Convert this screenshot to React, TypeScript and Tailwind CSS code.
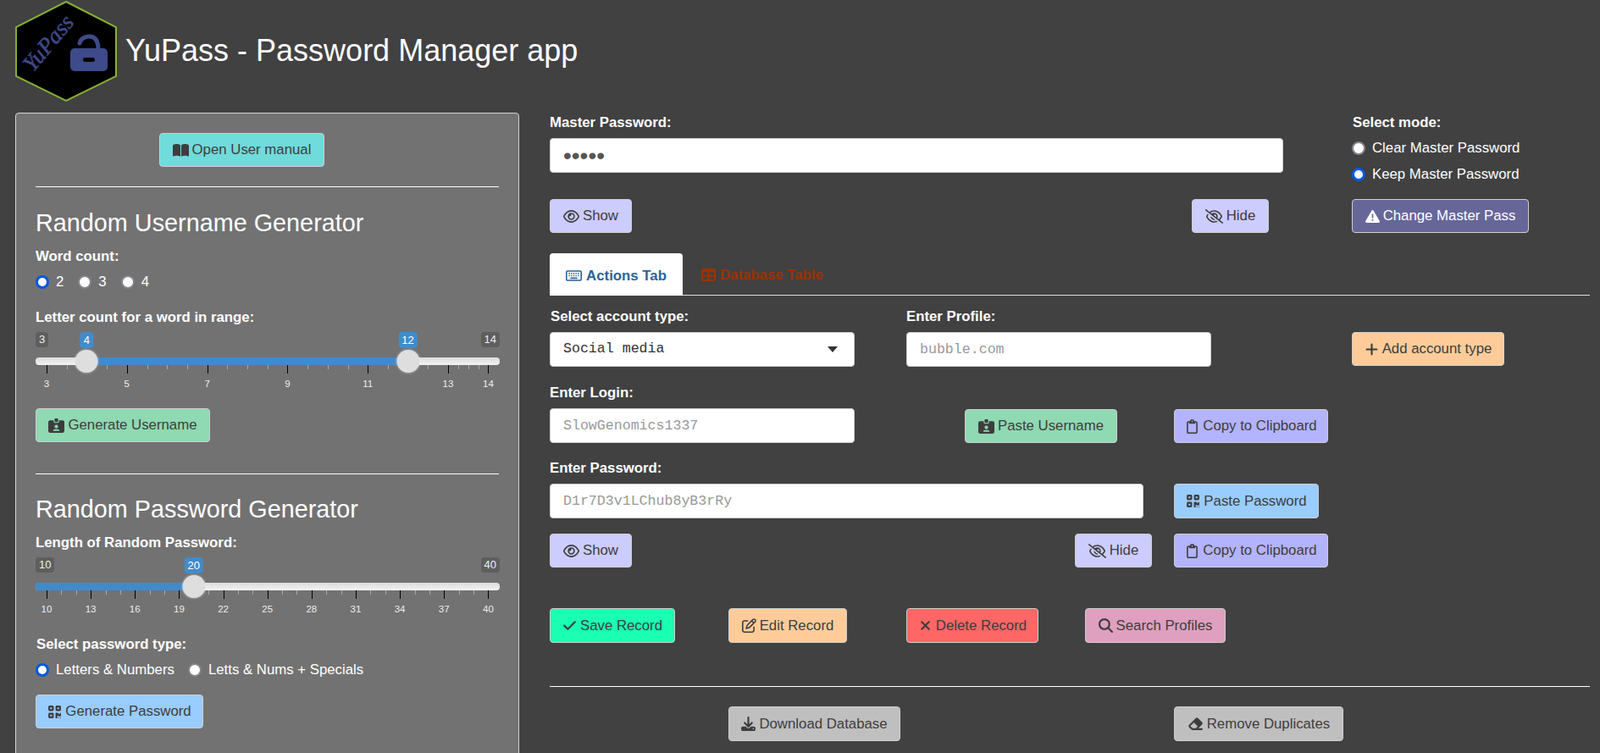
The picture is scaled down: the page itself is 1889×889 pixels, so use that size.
import type { ReactNode } from 'react'
import {
  FaBookOpen,
  FaCheck,
  FaDownload,
  FaEraser,
  FaIdCardClip,
  FaMagnifyingGlass,
  FaPlus,
  FaQrcode,
  FaRegClipboard,
  FaRegEye,
  FaRegEyeSlash,
  FaRegKeyboard,
  FaRegPenToSquare,
  FaTable,
  FaTriangleExclamation,
  FaXmark,
} from 'react-icons/fa6'

function Logo() {
  return (
    <svg width="120" height="120" viewBox="18 1 120 120" className="shrink-0">
      <polygon points="78,2 137,32 137,90 78,119 19,90 19,32" fill="#000" stroke="#86b034" strokeWidth="2" />
      <text
        x="0"
        y="0"
        transform="translate(39 86) rotate(-50)"
        fill="#3f4a8a"
        stroke="#3f4a8a"
        strokeWidth="0.5"
        fontFamily='"Liberation Serif", serif'
        fontStyle="italic"
        fontSize="27"
      >
        YuPass
      </text>
      <path d="M94 51 C95 46 100 43 105 43 C112 43 116 48 116 58" fill="none" stroke="#3f4a8a" strokeWidth="5" strokeLinecap="round" />
      <rect x="83" y="57" width="44" height="27" rx="5" fill="#3f4a8a" />
      <rect x="98" y="68" width="14" height="5" rx="2.5" fill="#000" />
    </svg>
  )
}

function Btn({ icon, text, className = '', tall = false }: { icon: ReactNode; text: string; className?: string; tall?: boolean }) {
  return (
    <button
      className={`flex items-center justify-center gap-[4px] rounded-[4px] border border-[#cfcfcf] text-[16.8px] shrink-0 ${tall ? 'h-[41px]' : 'h-[40px]'} ${className}`}
    >
      {icon}
      <span>{text}</span>
    </button>
  )
}

function Label({ children, className = '' }: { children: ReactNode; className?: string }) {
  return <div className={`h-[22px] leading-[22px] text-[16.8px] font-bold text-white ${className}`}>{children}</div>
}

function Radio({ label, checked = false, className = '' }: { label: string; checked?: boolean; className?: string }) {
  return (
    <label className={`flex items-center gap-[8px] text-[16.8px] text-white h-[22px] ${className}`}>
      <input
        type="radio"
        checked={checked}
        readOnly
        className="appearance-none w-[16px] h-[16px] m-0 rounded-full bg-white border-2 border-[#84848c] checked:border-[3px] checked:border-[#0058e0]"
      />
      {label}
    </label>
  )
}

function TextBox({ value, placeholder, type = 'text', className = '' }: { value?: string; placeholder?: string; type?: string; className?: string }) {
  const isPassword = type === 'password'
  return (
    <input
      type={type}
      defaultValue={value}
      placeholder={placeholder}
      className={`h-[41px] px-[15px] rounded-[4px] border border-[#cccccc] bg-white ${isPassword ? 'text-[28px]' : 'text-[16.6px]'} text-[#555] placeholder:text-[#999] outline-none shrink-0 ${className}`}
      style={{ fontFamily: isPassword ? '"Liberation Sans", sans-serif' : '"Liberation Mono", monospace' }}
    />
  )
}

type SliderProps = {
  min: number
  max: number
  unit: number
  labels: number[]
  minors: number[]
  values: number[]
  fromStart?: boolean
}

function RangeSlider({ min, max, unit, labels, minors, values, fromStart }: SliderProps) {
  const at = (v: number) => 13 + (v - min) * unit
  const fillFrom = fromStart ? 0 : at(values[0])
  const fillTo = at(values[values.length - 1])
  return (
    <div className="relative h-[72px] w-[548px] text-white">
      <span className="absolute left-0 top-0 h-[18px] px-[4px] leading-[18px] text-[13px] rounded-[4px] bg-[#5e5e5e] text-[#eee]">{min}</span>
      <span className="absolute right-0 top-0 h-[18px] px-[4px] leading-[18px] text-[13px] rounded-[4px] bg-[#5e5e5e] text-[#eee]">{max}</span>
      <div className="absolute left-0 right-0 top-[30px] h-[9px] rounded-[4px] bg-gradient-to-b from-[#dddddd] to-[#f2f2f2]" />
      <div className="absolute top-[30px] h-[9px] bg-[#428bca] rounded-l-[3px]" style={{ left: fillFrom, width: fillTo - fillFrom }} />
      {minors.map(v => (
        <div key={v} className="absolute top-[39px] h-[5px] w-px bg-[#a8a8a8]" style={{ left: at(v) }} />
      ))}
      {labels.map(v => (
        <div key={v}>
          <div className="absolute top-[39px] h-[10px] w-px bg-black" style={{ left: at(v) }} />
          <span className="absolute top-[54px] -translate-x-1/2 leading-[14px] text-[11.5px] text-[#eeeeee]" style={{ left: at(v) }}>{v}</span>
        </div>
      ))}
      {values.map(v => (
        <div key={v}>
          <span className="absolute top-0 h-[19px] px-[4px] -translate-x-1/2 leading-[19px] text-[13px] rounded-[4px] bg-[#428bca] text-white" style={{ left: at(v) }}>{v}</span>
          <div className="absolute top-[21px] h-[27px] w-[27px] -translate-x-1/2 rounded-full bg-[#dedede] shadow-[0_0_3px_#ffffff99]" style={{ left: at(v) }} />
        </div>
      ))}
    </div>
  )
}

const idIcon = <FaIdCardClip size={19} />
const qrIcon = <FaQrcode size={17} />
const eyeIcon = <FaRegEye size={19} />
const eyeOffIcon = <FaRegEyeSlash size={21} />
const clipIcon = <FaRegClipboard size={17} />

const usernameMinors = [3.5, 4, 4.5, 5.5, 6, 6.5, 7.5, 8, 8.5, 9.5, 10, 10.5, 11.5, 12, 12.5, 13.25, 13.5, 13.75]
const passwordMinors = [11, 12, 14, 15, 17, 18, 20, 21, 23, 24, 26, 27, 29, 30, 32, 33, 35, 36, 38, 39]

export default function App() {
  return (
    <div
      className="h-[889px] overflow-hidden bg-[#414141] text-[#3d3d3d]"
      style={{ fontFamily: '"Liberation Sans", Arial, sans-serif' }}
    >
      {/* Header */}
      <div className="flex items-center h-[121px] pl-[18px] pt-[1px]">
        <Logo />
        <h1 className="ml-[10px] text-[36px] leading-[40px] text-white -mt-[2px]">YuPass - Password Manager app</h1>
      </div>

      <div className="flex items-start pl-[18px] mt-[12px]">
        {/* Sidebar */}
        <div className="w-[595px] h-[900px] shrink-0 rounded-[4px] border border-[#d4d4d4] bg-[#727272] px-[23px] pt-[23px]">
          <div className="flex pl-[146px]">
            <Btn icon={<FaBookOpen size={19} />} text="Open User manual" className="w-[195px] bg-[#6fdbdb]" />
          </div>
          <hr className="mt-[23px] border-0 border-t border-white" />
          <h3 className="mt-[22px] text-[28.8px] leading-[40px] text-white">Random Username Generator</h3>
          <Label className="mt-[9px]">Word count:</Label>
          <div className="flex gap-[17px] mt-[8px]">
            <Radio label="2" checked />
            <Radio label="3" />
            <Radio label="4" />
          </div>
          <Label className="mt-[20px] mb-[6px]">Letter count for a word in range:</Label>
          <RangeSlider
            min={3}
            max={14}
            unit={47.4}
            labels={[3, 5, 7, 9, 11, 13, 14]}
            minors={usernameMinors}
            values={[4, 12]}
          />
          <Btn icon={idIcon} text="Generate Username" className="w-[206px] mt-[18px] bg-[#8fd9b3]" />
          <hr className="mt-[37px] border-0 border-t border-white" />
          <h3 className="mt-[21px] text-[28.8px] leading-[40px] text-white">Random Password Generator</h3>
          <Label className="mt-[9px]">Length of Random Password:</Label>
          <div className="mt-[6px]">
            <RangeSlider
              min={10}
              max={40}
              unit={17.38}
              labels={[10, 13, 16, 19, 22, 25, 28, 31, 34, 37, 40]}
              minors={passwordMinors}
              values={[20]}
              fromStart
            />
          </div>
          <Label className="mt-[20px] ml-px">Select password type:</Label>
          <div className="flex gap-[16px] mt-[8px]">
            <Radio label="Letters & Numbers" checked />
            <Radio label="Letts & Nums + Specials" />
          </div>
          <Btn icon={qrIcon} text="Generate Password" className="w-[198px] mt-[18px] bg-[#99ccff]" />
        </div>

        {/* Main column */}
        <div className="w-[1228px] ml-[36px] shrink-0">
          <div className="flex">
            <div className="w-[947px]">
              <Label className="mt-px">Master Password:</Label>
              <TextBox type="password" value="12345" className="w-[866px] mt-[7px] block" />
              <div className="flex justify-between w-[849px] mt-[31px]">
                <Btn icon={eyeIcon} text="Show" className="w-[97px] bg-[#ccccff]" />
                <Btn icon={eyeOffIcon} text="Hide" className="w-[91px] bg-[#ccccff]" />
              </div>
            </div>
            <div>
              <Label className="mt-px ml-px">Select mode:</Label>
              <Radio label="Clear Master Password" className="mt-[8px]" />
              <Radio label="Keep Master Password" checked className="mt-[9px]" />
              <Btn icon={<FaTriangleExclamation size={17} />} text="Change Master Pass" className="w-[209px] mt-[18px] bg-[#666699] text-white" />
            </div>
          </div>

          {/* Tabs */}
          <div className="flex h-[75px] items-end border-b border-[#dddddd] mt-[-1px]">
            <div className="flex items-center justify-center gap-[5px] w-[157px] h-[50px] pt-[3px] -mb-px rounded-t-[4px] bg-white text-[16.8px] font-bold text-[#2a6496]">
              <FaRegKeyboard size={19} />
              Actions Tab
            </div>
            <div className="flex items-center gap-[5px] h-[50px] pt-[3px] ml-[22px] text-[16.8px] font-bold text-[#993300]">
              <FaTable size={17} />
              Database Table
            </div>
          </div>

          <div className="flex mt-[14px]">
            <div className="w-[421px]">
              <Label className="ml-px">Select account type:</Label>
              <div className="flex items-center justify-between w-[360px] h-[41px] mt-[7px] px-[15px] rounded-[4px] border border-[#cccccc] bg-white text-[16.6px] text-[#333]">
                <span style={{ fontFamily: '"Liberation Mono", monospace' }}>Social media</span>
                <svg width="14" height="7" viewBox="0 0 14 7" className="mr-[3px]">
                  <path d="M1 0h12L7 7z" fill="#333" />
                </svg>
              </div>
            </div>
            <div className="w-[526px]">
              <Label>Enter Profile:</Label>
              <TextBox placeholder="bubble.com" className="w-[360px] mt-[7px] block" />
            </div>
            <Btn icon={<FaPlus size={17} />} text="Add account type" className="w-[180px] mt-[29px] bg-[#ffcc99]" />
          </div>

          <div className="flex items-end mt-[20px]">
            <div className="w-[490px]">
              <Label>Enter Login:</Label>
              <TextBox placeholder="SlowGenomics1337" className="w-[360px] mt-[7px] block" />
            </div>
            <Btn icon={idIcon} text="Paste Username" className="w-[180px] bg-[#8fd9b3]" />
            <Btn icon={clipIcon} text="Copy to Clipboard" className="w-[182px] ml-[67px] bg-[#b3b3ff]" />
          </div>

          <div className="flex items-end mt-[19px]">
            <div className="w-[737px]">
              <Label>Enter Password:</Label>
              <TextBox placeholder="D1r7D3v1LChub8yB3rRy" className="w-[701px] mt-[7px] block" />
            </div>
            <Btn icon={qrIcon} text="Paste Password" tall className="w-[171px] bg-[#99ccff]" />
          </div>

          <div className="flex mt-[18px]">
            <Btn icon={eyeIcon} text="Show" className="w-[97px] bg-[#ccccff]" />
            <Btn icon={eyeOffIcon} text="Hide" className="w-[91px] ml-[523px] bg-[#ccccff]" />
            <Btn icon={clipIcon} text="Copy to Clipboard" className="w-[182px] ml-[26px] bg-[#b3b3ff]" />
          </div>

          <div className="flex mt-[48px]">
            <Btn icon={<FaCheck size={17} />} text="Save Record" tall className="w-[148px] bg-[#1affb2]" />
            <Btn icon={<FaRegPenToSquare size={17} />} text="Edit Record" tall className="w-[140px] ml-[63px] bg-[#ffcc99]" />
            <Btn icon={<FaXmark size={17} />} text="Delete Record" tall className="w-[156px] ml-[70px] bg-[#ff6666]" />
            <Btn icon={<FaMagnifyingGlass size={17} />} text="Search Profiles" tall className="w-[166px] ml-[55px] bg-[#df9fbf]" />
          </div>

          <hr className="mt-[51px] border-0 border-t border-white" />

          <div className="flex mt-[23px] pl-[211px]">
            <Btn icon={<FaDownload size={17} />} text="Download Database" tall className="w-[203px] bg-[#bfbfbf]" />
            <Btn icon={<FaEraser size={19} />} text="Remove Duplicates" tall className="w-[200px] ml-[323px] bg-[#bfbfbf]" />
          </div>
        </div>
      </div>
    </div>
  )
}
